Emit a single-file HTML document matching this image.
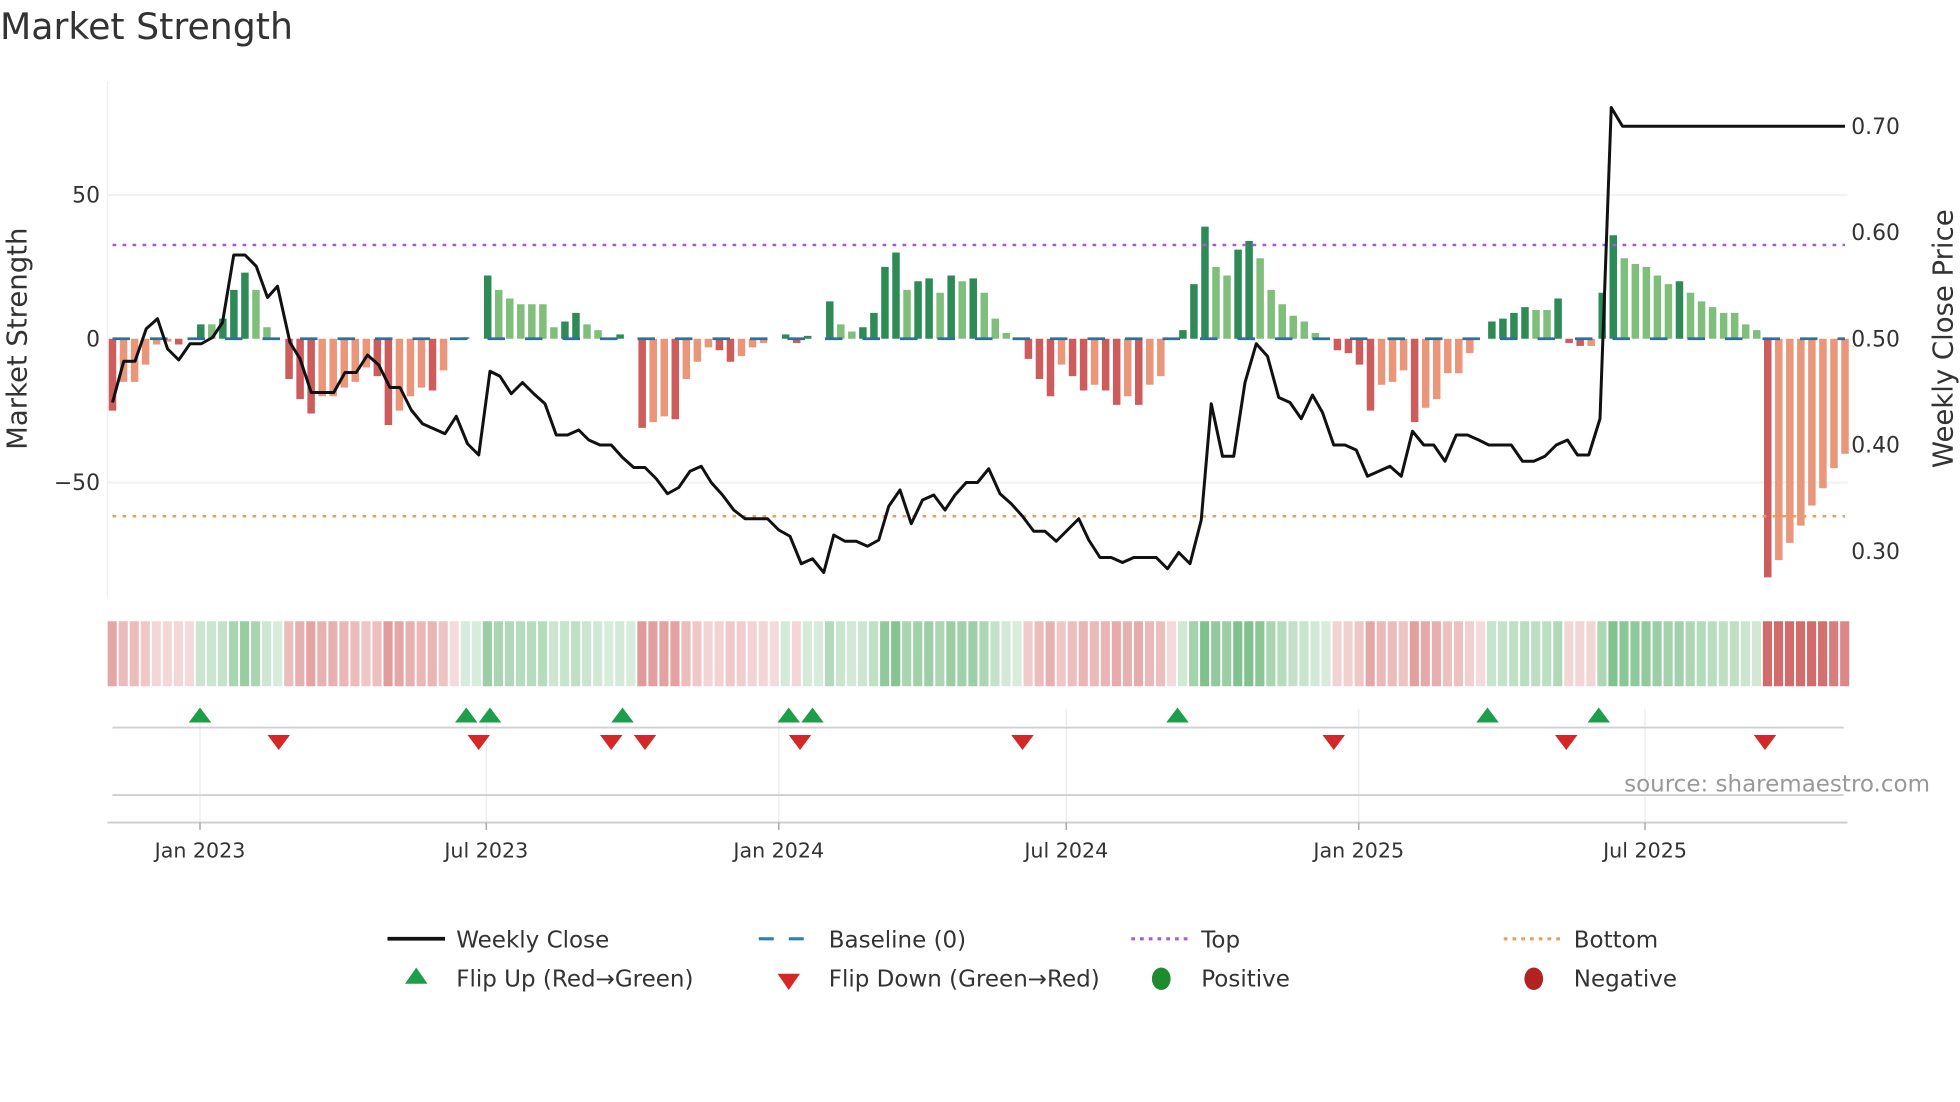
<!DOCTYPE html>
<html><head><meta charset="utf-8"><style>
html,body{margin:0;padding:0;background:#fff;overflow:hidden}
svg{display:block;font-family:"DejaVu Sans","Liberation Sans",sans-serif}
</style></head><body>
<svg id="s" xmlns="http://www.w3.org/2000/svg" width="1960" height="1102" viewBox="0 0 1568 881.6">
<rect width="1568" height="882" fill="#fff"/>
<text x="0" y="31" font-size="29" fill="#333">Market Strength</text>
<line x1="86" y1="65" x2="86" y2="478" stroke="#eee" stroke-width="1"/>
<line x1="86" y1="156" x2="1478" y2="156" stroke="#eef0f3" stroke-width="1.5"/>
<line x1="86" y1="386" x2="1478" y2="386" stroke="#eef0f3" stroke-width="1.5"/>
<g font-size="17.5" fill="#333">
<text x="80" y="162" text-anchor="end">50</text>
<text x="80" y="277" text-anchor="end">0</text>
<text x="80" y="392" text-anchor="end">−50</text>
<text x="1481" y="107">0.70</text>
<text x="1481" y="192">0.60</text>
<text x="1481" y="277">0.50</text>
<text x="1481" y="362">0.40</text>
<text x="1481" y="447">0.30</text>
</g>
<text transform="translate(21,271) rotate(-90)" font-size="22" fill="#333" text-anchor="middle">Market Strength</text>
<text transform="translate(1562,271) rotate(-90)" font-size="22" fill="#333" text-anchor="middle">Weekly Close Price</text>
<g id="bars"></g>
<line x1="90" y1="271" x2="1476" y2="271" stroke="#2e6f9e" stroke-width="2.2" stroke-dasharray="14,16"/>
<line x1="90" y1="196" x2="1476" y2="196" stroke="#a35ddb" stroke-width="2" stroke-dasharray="3,5"/>
<line x1="90" y1="413" x2="1476" y2="413" stroke="#e8a060" stroke-width="2" stroke-dasharray="3,5"/>
<polyline id="price" fill="none" stroke="#111" stroke-width="2.4" stroke-linejoin="round"/>
<g id="heat"></g>
<g stroke="#e8ecf0" stroke-width="1">
<line x1="160" y1="567" x2="160" y2="658"/><line x1="389" y1="567" x2="389" y2="658"/><line x1="623" y1="567" x2="623" y2="658"/><line x1="853" y1="567" x2="853" y2="658"/><line x1="1087" y1="567" x2="1087" y2="658"/><line x1="1316" y1="567" x2="1316" y2="658"/>
</g>
<line x1="90" y1="582" x2="1475" y2="582" stroke="#d0d0d0" stroke-width="1.5"/>
<line x1="90" y1="636" x2="1475" y2="636" stroke="#d0d0d0" stroke-width="1.5"/>
<line x1="86" y1="658" x2="1478" y2="658" stroke="#ccc" stroke-width="1.5"/>
<g id="marks"></g>
<g stroke="#aaa" stroke-width="1.2">
<line x1="160" y1="658" x2="160" y2="664"/><line x1="389" y1="658" x2="389" y2="664"/><line x1="623" y1="658" x2="623" y2="664"/><line x1="853" y1="658" x2="853" y2="664"/><line x1="1087" y1="658" x2="1087" y2="664"/><line x1="1316" y1="658" x2="1316" y2="664"/>
</g>
<g font-size="16.5" fill="#333" text-anchor="middle">
<text x="160" y="686">Jan 2023</text><text x="389" y="686">Jul 2023</text><text x="623" y="686">Jan 2024</text><text x="853" y="686">Jul 2024</text><text x="1087" y="686">Jan 2025</text><text x="1316" y="686">Jul 2025</text>
</g>
<text x="1544" y="633" font-size="18.4" fill="#999" text-anchor="end">source: sharemaestro.com</text>
<g font-size="18.4" fill="#333">
<line x1="310" y1="751" x2="356" y2="751" stroke="#111" stroke-width="3"/><text x="365" y="758">Weekly Close</text>
<line x1="607" y1="751" x2="652" y2="751" stroke="#2e7fb8" stroke-width="2.5" stroke-dasharray="12,12"/><text x="663" y="758">Baseline (0)</text>
<line x1="905" y1="751" x2="950" y2="751" stroke="#a35ddb" stroke-width="2.5" stroke-dasharray="3,4"/><text x="961" y="758">Top</text>
<line x1="1203" y1="751" x2="1248" y2="751" stroke="#e8a060" stroke-width="2.5" stroke-dasharray="3,4"/><text x="1259" y="758">Bottom</text>
<polygon points="333,774 342,787 324,787" fill="#1e9e4a"/><text x="365" y="789">Flip Up (Red→Green)</text>
<polygon points="622,779 640,779 631,792" fill="#d62728"/><text x="663" y="789">Flip Down (Green→Red)</text>
<ellipse cx="929" cy="783" rx="7.5" ry="9" fill="#1f8a2e"/><text x="961" y="789">Positive</text>
<ellipse cx="1227" cy="783" rx="7.5" ry="9" fill="#b22222"/><text x="1259" y="789">Negative</text>
</g>
<script><![CDATA[
var v=[-25,-15,-15,-9,-2,-1,-2,0,5,5,7,17,23,17,4,0,-14,-21,-26,-20,-20,-17,-15,-10,-13,-30,-25,-20,-17,-18,-11,0,0.5,0,22,17,14,12,12,12,4,6,9,5,3,0,1.5,0,-31,-29,-27,-28,-14,-8,-3,-4,-8,-6,-3,-1.5,0,1.5,-1.5,1,0,13,5,2.5,4,9,25,30,17,20,21,16,22,20,21,16,7,2,0,-7,-14,-20,-9,-13,-18,-16,-18,-23,-20,-23,-16,-13,0,3,19,39,25,22,31,34,28,17,12,8,6,2,0,-4,-5,-9,-25,-16,-15,-11,-29,-24,-21,-12,-12,-5,0,6,7,9,11,10,10,14,-1.5,-2.5,-2.5,16,36,28,26,25,22,19,20,16,13,11,9,9,5,3,-83,-77,-71,-65,-58,-52,-45,-40];
var NS="http://www.w3.org/2000/svg",n=v.length,st=(1476-90)/(n-1);
function el(t,a,p){var e=document.createElementNS(NS,t);for(var k in a)e.setAttribute(k,a[k]);document.getElementById(p).appendChild(e);}
for(var i=0;i<n;i++){var x=90+i*st,val=v[i],pr=i?v[i-1]:0,c;
 if(val>0)c=(val>pr)?"#2e8b57":"#7fbf7b";else c=(val<pr)?"#cd5c5c":"#e9967a";
 if(val!=0){var h=Math.abs(val)*2.3;el("rect",{x:x-3,y:val>0?271-h:271,width:6,height:h,fill:c},"bars");}
 var hc;
 if(val>0||(val==0&&i>0&&v[i-1]>0))hc="rgba(60,160,80,"+(0.2+Math.min(0.45,Math.abs(val)/70))+")";
 else hc="rgba(200,70,70,"+(0.2+Math.min(0.6,Math.abs(val)/90))+")";
 el("rect",{x:x-3.9,y:497,width:7.3,height:52,fill:hc},"heat");}
var p="90,322 99,289 108,289 117,263 126,255 134,279 143,288 152,275 161,275 170,270 178,258 187,204 196,204 205,213 214,238 222,229 232,274 240,287 249,314 258,314 267,314 276,298 285,298 294,284 303,292 312,310 320,310 329,328 338,339 347,343 356,347 365,333 374,355 383,364 392,297 400,301 409,315 418,306 427,315 436,323 445,348 454,348 463,344 471,352 480,356 489,356 498,366 507,374 516,374 525,383 534,395 543,390 552,377 561,373 569,386 578,396 587,408 596,415 605,415 614,415 623,424 632,429 641,451 650,447 659,458 667,428 676,433 685,433 694,437 703,432 711,405 720,392 729,419 738,400 747,396 756,408 764,396 773,386 782,386 791,375 800,395 809,403 818,413 827,425 836,425 845,433 854,424 863,415 871,432 880,446 889,446 898,450 907,446 916,446 925,446 934,455 943,442 952,451 961,416 969,323 978,365 987,365 996,306 1005,275 1014,285 1023,318 1032,322 1041,335 1050,316 1058,330 1067,356 1076,356 1085,360 1094,381 1103,377 1112,373 1121,381 1130,345 1139,356 1147,356 1156,369 1165,348 1174,348 1183,352 1191,356 1200,356 1209,356 1218,369 1227,369 1236,365 1245,356 1254,352 1262,364 1271,364 1280,335 1289,86 1298,101 1476,101";
document.getElementById("price").setAttribute("points",p);
[160,373,392,498,631,650,942,1190,1279].forEach(function(x){el("polygon",{points:x+",566 "+(x+9)+",578 "+(x-9)+",578",fill:"#1e9e4a"},"marks");});
[223,383,489,516,640,818,1067,1253,1412].forEach(function(x){el("polygon",{points:(x-9)+",588 "+(x+9)+",588 "+x+",600",fill:"#d62728"},"marks");});
]]></script>
</svg>
</body></html>
